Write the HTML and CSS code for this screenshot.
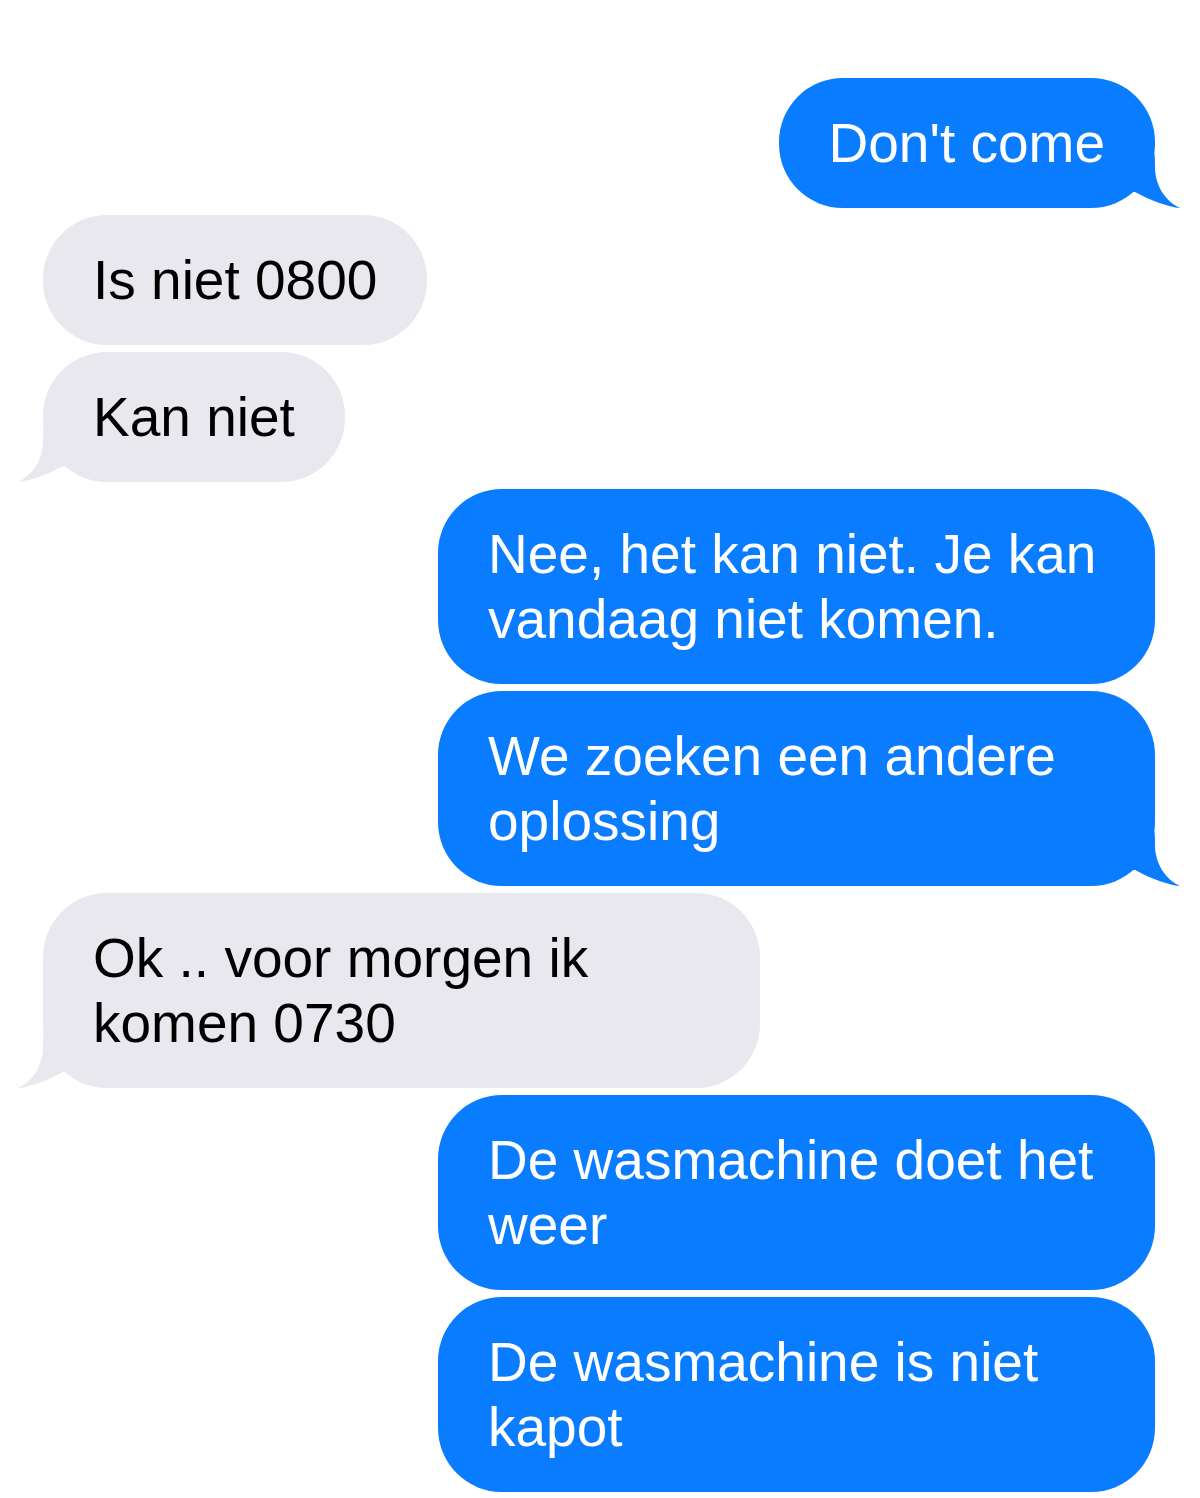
FILE: index.html
```html
<!DOCTYPE html>
<html>
<head>
  <title>Berichten</title>
  <link rel="stylesheet" href="styles.css">
</head>
<body>
  <div id="chat">
    <!-- sent messages are blue, received ones gray -->
    <div class="msg sent">Don't come
      <svg class="tail" width="75" height="75" viewBox="0 0 75 75"><path d="M5 20 L44.4 20 C44.9 25 45 29 45 34 C45 52 55 68 70 75 C58 74 42 68 25 59 L5 59 Z"/></svg>
    </div>
    <div class="msg received">Is niet 0800</div>
    <div class="msg received">Kan niet
      <svg class="tail" width="75" height="75" viewBox="0 0 75 75"><path d="M5 20 L44.4 20 C44.9 25 45 29 45 34 C45 52 55 68 70 75 C58 74 42 68 25 59 L5 59 Z"/></svg>
    </div>
    <div class="msg sent">Nee, het kan niet. Je kan vandaag niet komen.</div>
    <div class="msg sent">We zoeken een andere oplossing
      <svg class="tail" width="75" height="75" viewBox="0 0 75 75"><path d="M5 20 L44.4 20 C44.9 25 45 29 45 34 C45 52 55 68 70 75 C58 74 42 68 25 59 L5 59 Z"/></svg>
    </div>
    <div class="msg received">Ok .. voor morgen ik komen 0730
      <svg class="tail" width="75" height="75" viewBox="0 0 75 75"><path d="M5 20 L44.4 20 C44.9 25 45 29 45 34 C45 52 55 68 70 75 C58 74 42 68 25 59 L5 59 Z"/></svg>
    </div>
    <div class="msg sent">De wasmachine doet het weer</div>
    <div class="msg sent">De wasmachine is niet kapot</div>
  </div>
</body>
</html>
```

FILE: styles.css
```css
body {
  background-color: #fff;
  font-family: "Liberation Sans", Arial, sans-serif;
  margin: 0;
  padding: 0;
}

#chat {
  display: flex;
  flex-direction: column;
  gap: 7px;
  padding: 78px 45px 0 43px;
}

.msg {
  position: relative;
  box-sizing: border-box;
  max-width: 717px;
  padding: 33px 50px 32px 50px;
  border-radius: 64px;
  font-size: 55px;
  line-height: 65px;
}

.sent {
  align-self: flex-end;
  background-color: #0a7cff; /* iMessage blue */
  color: #fff;
}

.received {
  align-self: flex-start;
  background-color: #e9e8ee; /* light gray bubble */
  color: #000;
}

/* little tail at the bottom corner of the last bubble in a group */
.tail {
  position: absolute;
  bottom: 0;
}

.sent .tail {
  right: -30px;
  fill: #0a7cff;
}

.received .tail {
  left: -30px;
  transform: scaleX(-1);
  fill: #e9e8ee;
}
```
